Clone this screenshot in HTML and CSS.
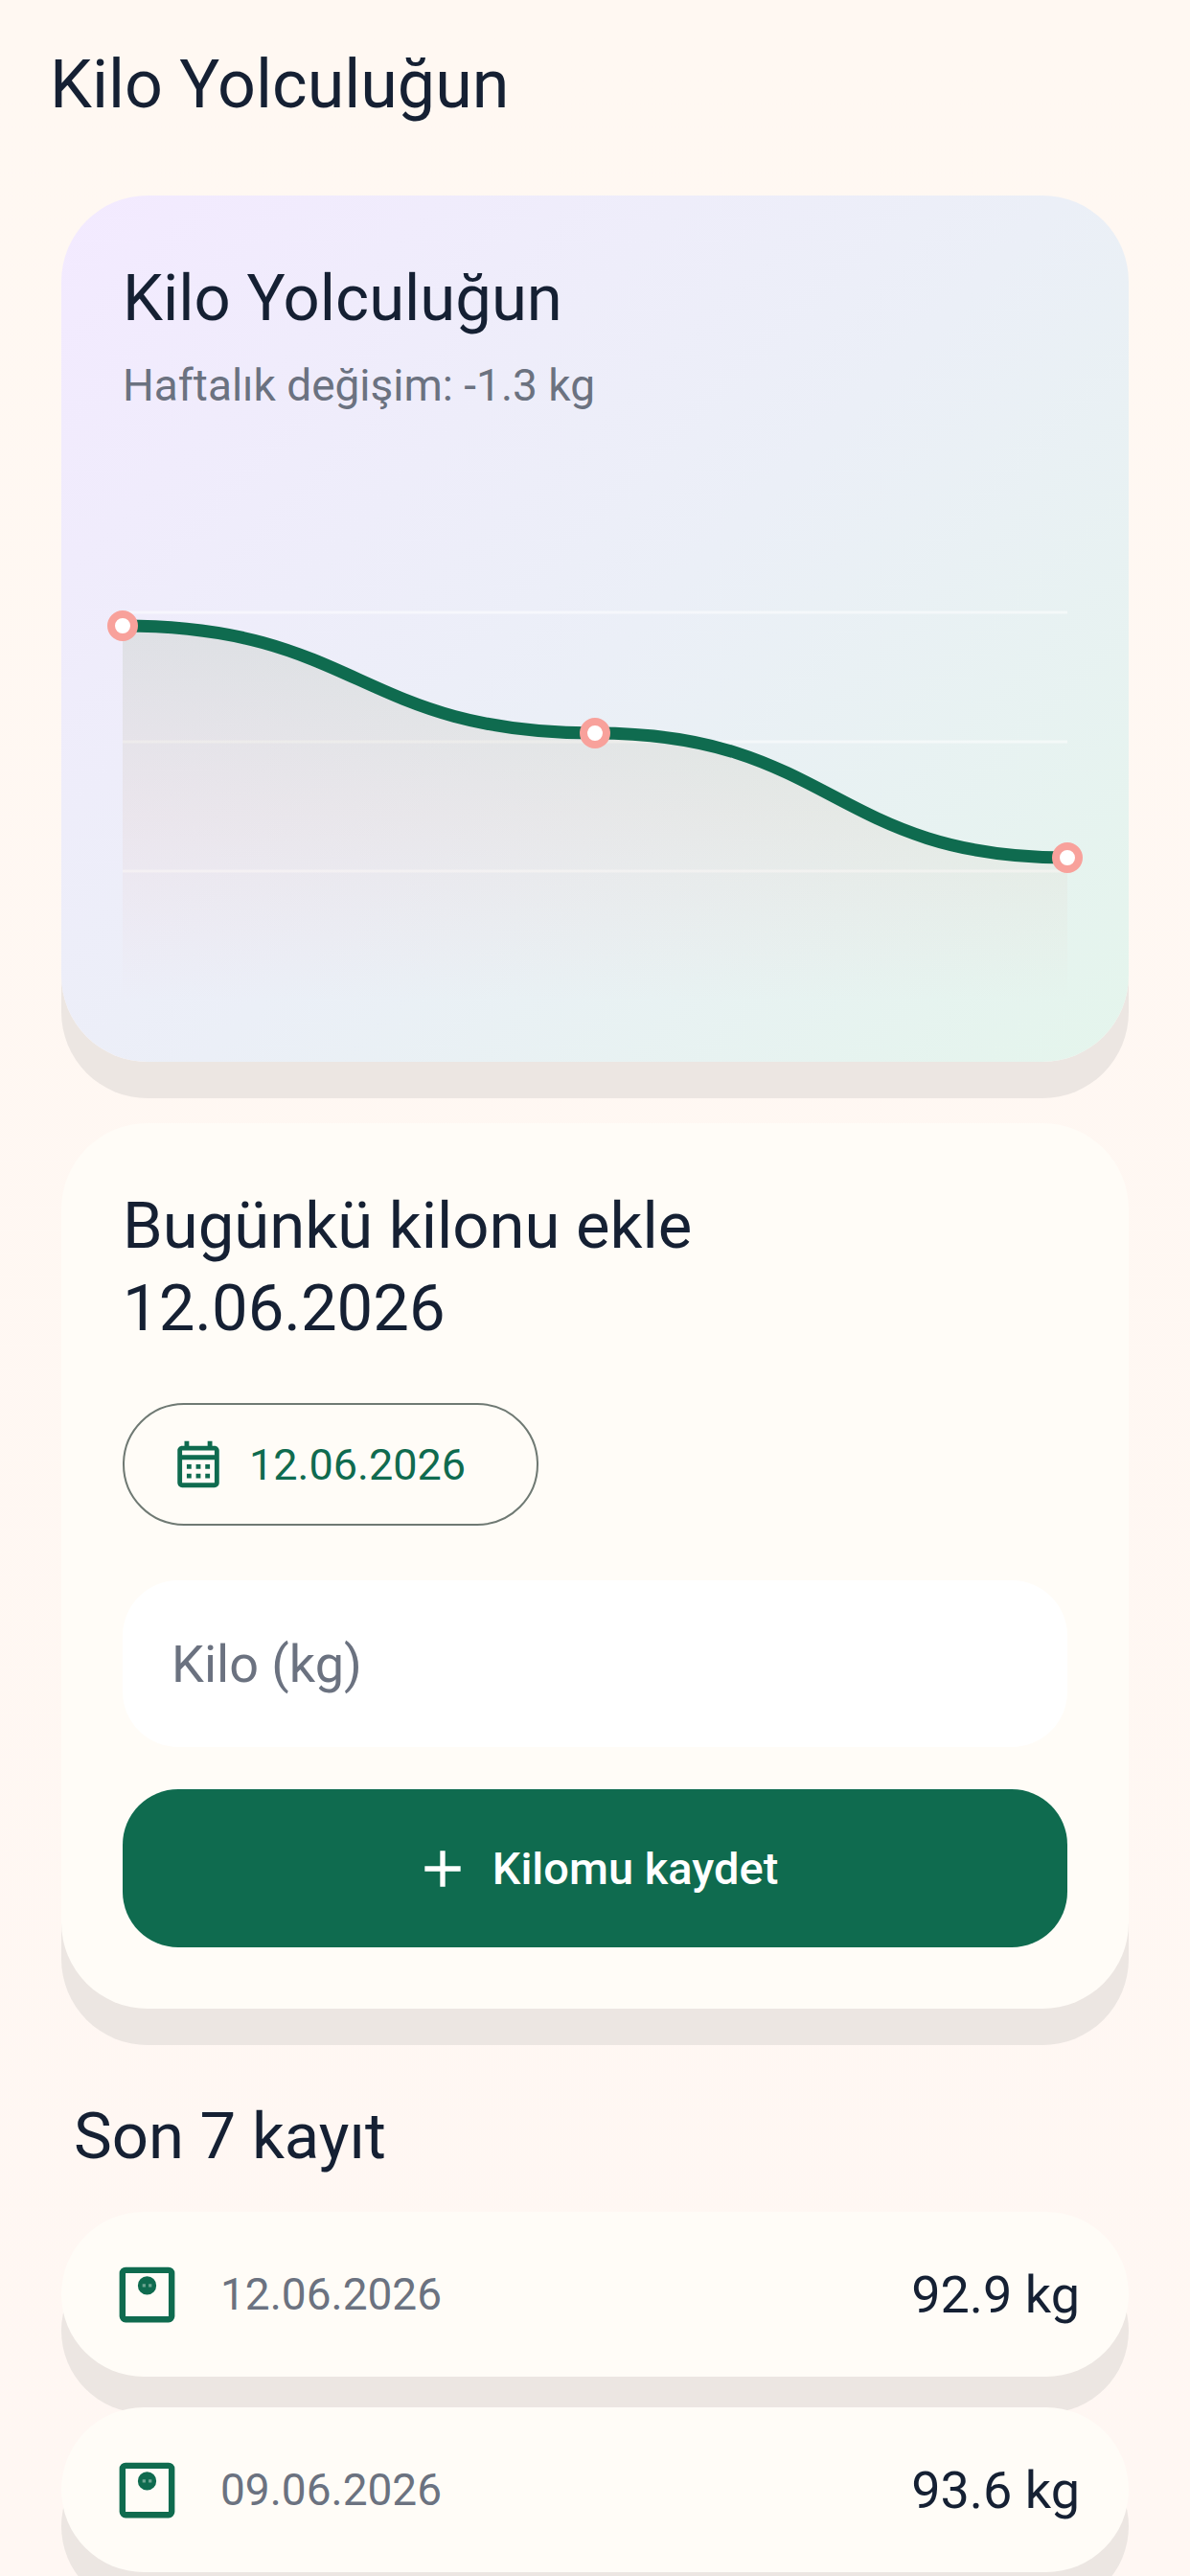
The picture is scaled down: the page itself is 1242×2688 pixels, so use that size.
FILE: index.html
```html
<!DOCTYPE html>
<html lang="tr">
<head>
<meta charset="utf-8">
<meta name="viewport" content="width=device-width, initial-scale=1">
<title>Kilo Yolculuğun</title>
<link rel="stylesheet" href="styles.css">
</head>
<body>
<header class="app-bar">
  <h1 class="app-title">Kilo Yolculuğun</h1>
</header>
<main class="content">
  <section class="card card-chart">
    <h2 class="heading">Kilo Yolculuğun</h2>
    <p class="summary">Haftalık değişim: -1.3 kg</p>
    <svg class="chart" viewBox="0 0 986 540" role="img" aria-label="Kilo grafiği">
      <defs>
        <linearGradient id="area" gradientUnits="userSpaceOnUse" x1="0" y1="149" x2="0" y2="540">
          <stop class="area-start" offset="0"/>
          <stop class="area-middle" offset="0.5"/>
          <stop class="area-end" offset="1"/>
        </linearGradient>
      </defs>
      <path class="grid" d="M0 135H986M0 270H986M0 405H986"/>
      <path fill="url(#area)" d="M0 149C246 149 246 261 493 261S740 391 986 391V540H0Z"/>
      <path class="line" d="M0 149C246 149 246 261 493 261S740 391 986 391"/>
      <g class="point">
        <circle cx="0" cy="149" r="12"/>
        <circle cx="493" cy="261" r="12"/>
        <circle cx="986" cy="391" r="12"/>
      </g>
    </svg>
  </section>

  <form class="card card-form">
    <h2 class="heading">Bugünkü kilonu ekle<br>12.06.2026</h2>
    <button class="date-button" type="button">
      <svg class="icon-date" viewBox="0 0 24 24" aria-hidden="true">
        <path fill="currentColor" fill-rule="evenodd" d="M19 4h-1V2h-2v2H8V2H6v2H5c-1.110 0-1.990.9-1.990 2L3 20a2 2 0 0 0 2 2h14c1.100 0 2-.9 2-2V6c0-1.100-.9-2-2-2zM19 20H5V10h14zM19 8H5V6h14z"/>
        <path fill="currentColor" d="M7 12h2v2H7zM11 12h2v2h-2zM15 12h2v2h-2zM7 16h2v2H7zM11 16h2v2h-2zM15 16h2v2h-2z"/>
      </svg>
      12.06.2026
    </button>
    <input class="weight-input" type="text" inputmode="decimal" placeholder="Kilo (kg)" aria-label="Kilo (kg)">
    <button class="save-button" type="submit">
      <svg class="icon-add" viewBox="0 0 24 24" aria-hidden="true"><path fill="currentColor" d="M19 13h-6v6h-2v-6H5v-2h6V5h2v6h6z"/></svg>
      Kilomu kaydet
    </button>
  </form>

  <section class="history">
    <h2 class="heading history-title">Son 7 kayıt</h2>
    <ul class="entries">
      <li class="entry">
        <svg class="icon-scale" viewBox="0 0 24 24" aria-hidden="true">
          <rect class="scale-frame" x="4" y="4" width="16" height="16" rx="1"/>
          <circle class="scale-dial" cx="12" cy="9" r="3"/>
          <path class="scale-marks" d="M10.500 8.500h1v1h-1zM12.500 8.500h1v1h-1z"/>
        </svg>
        <span class="entry-date">12.06.2026</span>
        <span class="entry-weight">92.9 kg</span>
      </li>
      <li class="entry">
        <svg class="icon-scale" viewBox="0 0 24 24" aria-hidden="true">
          <rect class="scale-frame" x="4" y="4" width="16" height="16" rx="1"/>
          <circle class="scale-dial" cx="12" cy="9" r="3"/>
          <path class="scale-marks" d="M10.500 8.500h1v1h-1zM12.500 8.500h1v1h-1z"/>
        </svg>
        <span class="entry-date">09.06.2026</span>
        <span class="entry-weight">93.6 kg</span>
      </li>
    </ul>
  </section>
</main>
</body>
</html>
```
FILE: styles.css
```css
* {
  box-sizing: border-box;
}

body {
  margin: 0;
  min-height: 100vh;
  background: linear-gradient(#fff8f2, #fff7f3);
  color: #152033;
  font-family: Roboto, "Noto Sans", sans-serif;
}

h1,
h2,
p,
ul {
  margin: 0;
  padding: 0;
  font-weight: 400;
}

.app-bar {
  display: flex;
  align-items: center;
  height: 176px;
  padding: 0 52px;
}

.app-title {
  font-size: 70px;
  line-height: 90px;
}

.content {
  padding: 28px 64px 0;
}

.heading {
  font-size: 67px;
  line-height: 86px;
}

.card,
.entry {
  border-radius: 90px;
  background: #fffcf7;
  box-shadow: 0 38px 0 #ece6e2;
}

.card {
  display: flex;
  flex-direction: column;
  margin-bottom: 64px;
  padding: 64px;
}

.card-chart {
  background: linear-gradient(135deg, #f3eaff, #ebeff7 52%, #e4f5ec);
}

.summary {
  margin-top: 16px;
  color: #6b7280;
  font-size: 46px;
  line-height: 64px;
}

.chart {
  display: block;
  width: 100%;
  margin-top: 70px;
  overflow: visible;
}

.area-start {
  stop-color: #6e8c50;
  stop-opacity: 0.13;
}

.area-middle {
  stop-color: #d2aa8c;
  stop-opacity: 0.12;
}

.area-end {
  stop-color: #f8a19b;
  stop-opacity: 0;
}

.grid {
  stroke: #fff;
  stroke-opacity: 0.5;
  stroke-width: 3;
}

.line {
  fill: none;
  stroke: #0f6b4f;
  stroke-width: 13;
}

.point {
  fill: #fff;
  stroke: #f8a19b;
  stroke-width: 8;
}

.date-button,
.weight-input,
.save-button {
  border: 0;
  font-family: inherit;
}

.date-button {
  display: flex;
  align-items: center;
  align-self: flex-start;
  gap: 24px;
  height: 128px;
  margin-top: 56px;
  padding: 0 74px 0 48px;
  border: 2px solid #6f7973;
  border-radius: 64px;
  background: transparent;
  color: #0f6b4f;
  font-size: 45px;
}

.icon-date {
  width: 58px;
  height: 58px;
}

.weight-input {
  width: 100%;
  height: 174px;
  margin-top: 57px;
  padding: 0 51px;
  border-radius: 58px;
  background: #fff;
  color: #152033;
  font-size: 54px;
}

.weight-input::placeholder {
  color: #6b7280;
  opacity: 1;
}

.save-button {
  display: flex;
  align-items: center;
  justify-content: center;
  gap: 20px;
  height: 165px;
  margin-top: 44px;
  border-radius: 58px;
  background: #0f6b4f;
  color: #fff;
  font-size: 47px;
  font-weight: 500;
}

.icon-add {
  width: 64px;
  height: 64px;
}

.history {
  padding-top: 26px;
}

.history-title {
  padding: 0 13px;
}

.entries {
  display: flex;
  flex-direction: column;
  gap: 32px;
  margin-top: 36px;
  list-style: none;
}

.entry {
  display: flex;
  align-items: center;
  height: 172px;
  padding: 0 51px;
}

.icon-scale {
  width: 77px;
  height: 77px;
}

.scale-frame {
  fill: none;
  stroke: #0f6b4f;
  stroke-width: 2;
}

.scale-dial {
  fill: #0f6b4f;
}

.scale-marks {
  fill: #6fa592;
}

.entry-date {
  flex: 1;
  margin-left: 38px;
  color: #6b7280;
  font-size: 46px;
}

.entry-weight {
  font-size: 54px;
}
```
